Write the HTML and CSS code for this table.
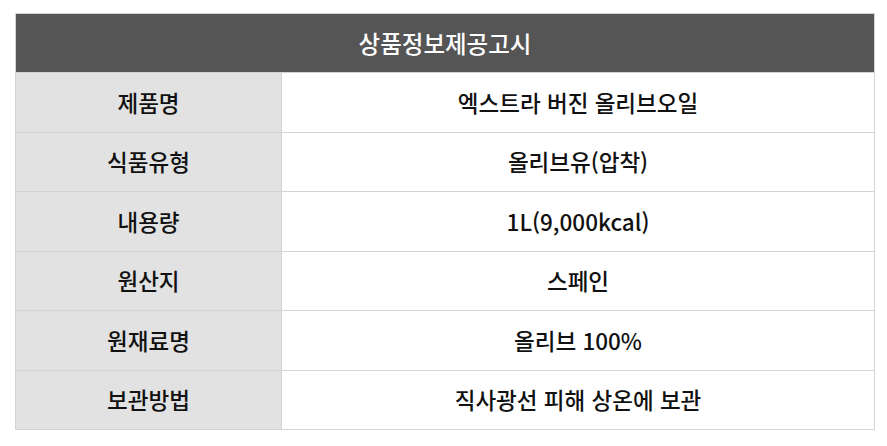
FILE: index.html
```html
<!DOCTYPE html>
<html lang="ko">
<head>
<meta charset="utf-8">
<link rel="stylesheet" href="styles.css">
</head>
<body>
<div class="wrap">
<table class="info">
  <colgroup><col class="col-label"><col class="col-value"></colgroup>
  <thead>
    <tr><th colspan="2" class="title">상품정보제공고시</th></tr>
  </thead>
  <tbody>
    <tr><th class="label">제품명</th><td class="value">엑스트라 버진 올리브오일</td></tr>
    <tr><th class="label">식품유형</th><td class="value">올리브유(압착)</td></tr>
    <tr><th class="label">내용량</th><td class="value">1L(9,000kcal)</td></tr>
    <tr><th class="label">원산지</th><td class="value">스페인</td></tr>
    <tr><th class="label">원재료명</th><td class="value">올리브 100%</td></tr>
    <tr><th class="label">보관방법</th><td class="value">직사광선 피해 상온에 보관</td></tr>
  </tbody>
</table>
</div>
</body>
</html>
```
FILE: styles.css
```css
html, body {
  margin: 0;
  padding: 0;
  background: #fff;
}
.wrap {
  padding: 13px 13px 0 15px;
}
.info {
  width: 860px;
  border-collapse: collapse;
  font-family: "Noto Sans CJK KR", "Noto Sans", sans-serif;
  font-size: 22.5px;
  line-height: 1.2;
  color: #111;
  table-layout: fixed;
}
.col-label {
  width: 266px;
}
.info th, .info td {
  border: 1px solid #d4d4d4;
  text-align: center;
  vertical-align: middle;
  font-weight: 500;
  padding: 0;
}
.title {
  background: #555555;
  color: #fff;
  font-size: 23.5px;
  height: 58px;
}
.label {
  background: #e2e2e2;
  height: 58.5px;
}
.value {
  background: #fff;
  height: 58.5px;
}
```
